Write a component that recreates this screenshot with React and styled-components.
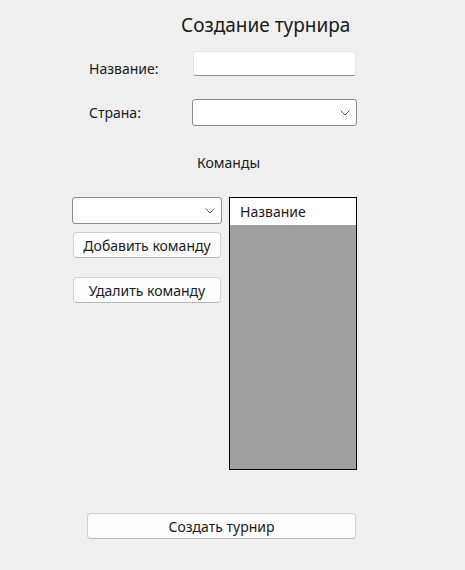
import React from 'react'
import styled, { createGlobalStyle } from 'styled-components'

const GlobalStyle = createGlobalStyle`
  html, body {
    margin: 0;
    padding: 0;
    background: #f0f0f0;
  }
  body {
    font-family: "Noto Sans", "Open Sans", sans-serif;
    color: #1a1a1a;
  }
`

const Window = styled.div`
  width: 465px;
  height: 570px;
  box-sizing: border-box;
  padding-top: 11px;
`

const Title = styled.div`
  margin-left: 181px;
  font-size: 19px;
  line-height: 28px;
  white-space: nowrap;
`

const FormGrid = styled.div`
  display: grid;
  grid-template-columns: 104px 164px;
  row-gap: 23px;
  margin-left: 89px;
  margin-top: 12px;
  align-items: center;
`

const Label = styled.div`
  font-size: 14px;
  line-height: 20px;
  ${p => p.$low && `
    align-self: end;
    margin-bottom: -3px;
  `}
`

const TextBox = styled.input`
  width: 163px;
  height: 25px;
  box-sizing: border-box;
  border: 1px solid #e6e6e6;
  border-bottom: 1px solid #8a8a8a;
  border-radius: 3px;
  background: #fff;
  outline: none;
  padding: 0 6px;
  font: inherit;
`

const Combo = styled.div`
  width: ${p => p.$w}px;
  height: 27px;
  box-sizing: border-box;
  border: 1px solid #8c8c8c;
  border-radius: 3px;
  background: #fff;
  display: flex;
  align-items: center;
  justify-content: flex-end;
  padding-right: 6px;
  margin-left: ${p => p.$ml || 0}px;
`

const Chevron = () => (
  <svg width="10" height="6" viewBox="0 0 10 6">
    <polyline points="0.5,0.5 5,5 9.5,0.5" fill="none" stroke="#606060" strokeWidth="1" />
  </svg>
)

const Subtitle = styled.div`
  margin-left: 197px;
  margin-top: 27px;
  font-size: 14px;
  line-height: 20px;
`

const TeamArea = styled.div`
  display: flex;
  gap: 7px;
  margin-left: 72px;
  margin-top: 24px;
`

const LeftColumn = styled.div`
  width: 150px;
  display: flex;
  flex-direction: column;
  align-items: flex-start;
`

const Button = styled.button`
  width: ${p => p.$w}px;
  height: 26px;
  box-sizing: border-box;
  border: 1px solid #d0d0d0;
  border-bottom-color: #b8b8b8;
  border-radius: 4px;
  background: #fdfdfd;
  font-family: inherit;
  font-size: 14px;
  color: #1a1a1a;
  padding: 0;
  margin-left: ${p => p.$ml || 0}px;
  margin-top: ${p => p.$mt || 0}px;
`

const ListBox = styled.div`
  width: 128px;
  height: 273px;
  box-sizing: border-box;
  border: 1px solid #000;
  background: #a0a0a0;
  display: flex;
  flex-direction: column;
`

const ListHeader = styled.div`
  background: #fff;
  height: 27px;
  font-size: 14px;
  line-height: 28px;
  padding-left: 10px;
`

const Footer = styled.div`
  margin-top: 43px;
  margin-left: 87px;
`

export default function App() {
  return (
    <>
      <GlobalStyle />
      <Window>
        <Title>Создание турнира</Title>
        <FormGrid>
          <Label $low>Название:</Label>
          <TextBox />
          <Label>Страна:</Label>
          <Combo $w={165} $ml={-1}><Chevron /></Combo>
        </FormGrid>
        <Subtitle>Команды</Subtitle>
        <TeamArea>
          <LeftColumn>
            <Combo $w={150}><Chevron /></Combo>
            <Button $w={148} $ml={1} $mt={8}>Добавить команду</Button>
            <Button $w={148} $ml={1} $mt={19}>Удалить команду</Button>
          </LeftColumn>
          <ListBox>
            <ListHeader>Название</ListHeader>
          </ListBox>
        </TeamArea>
        <Footer>
          <Button $w={269}>Создать турнир</Button>
        </Footer>
      </Window>
    </>
  )
}
